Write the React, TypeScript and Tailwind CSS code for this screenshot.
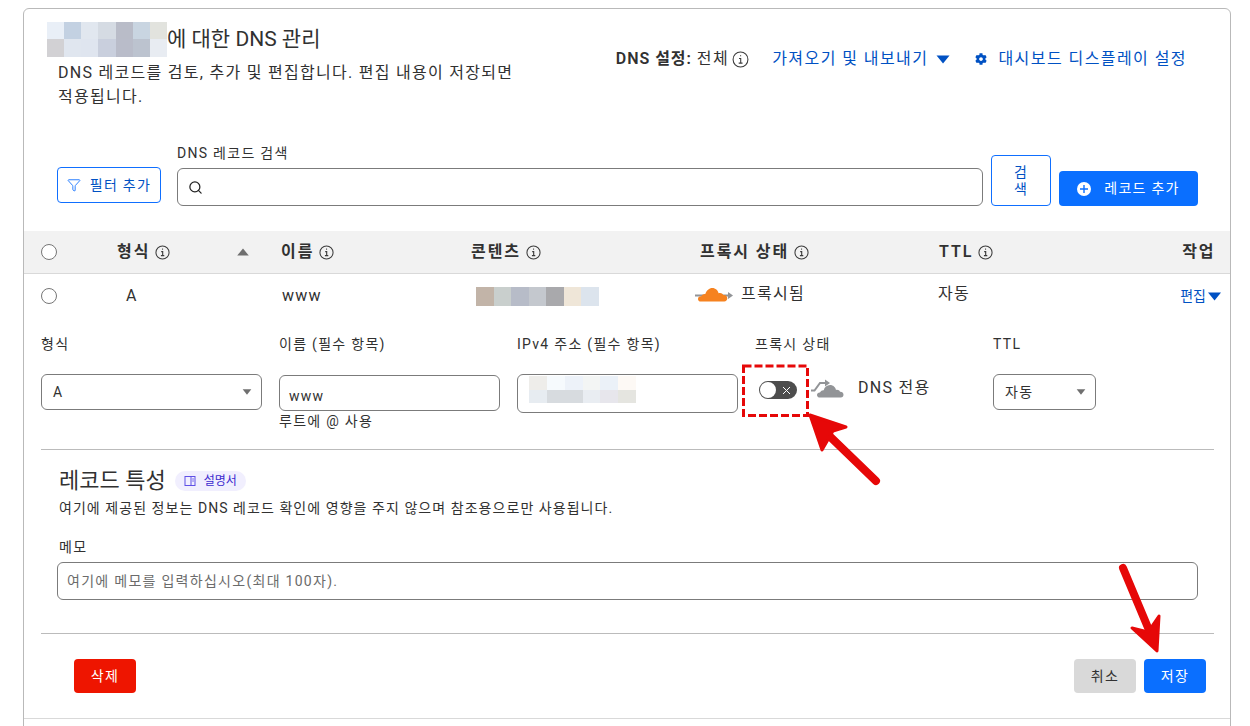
import React from 'react';
import { Filter, Search } from 'lucide-react';
import { FaCog } from 'react-icons/fa';

const mosaic = (colors: string[]) =>
  colors.map((c, i) => <div key={i} style={{ backgroundColor: c }} />);

const titleTiles = ['#e9eff7', '#c3d1e2', '#e1e7ef', '#d5dbe3', '#b9bcc8', '#c9d5e1', '#e2e3de', '#d2d1d4', '#e0e6ef', '#dfe5ef', '#c9cfdd', '#b9bcc9', '#bcc3cf', '#e8ecf2'];
const contentTiles = ['#c2b4a8', '#c9cfcd', '#b7bcc8', '#c4c8ce', '#a9a9ac', '#efe6d8', '#dce4ed'];
const ipTiles = ['#eeedea', '#f6fafd', '#edf2f9', '#f3f5f4', '#ebf1f8', '#fdf9f5', '#e7ecf1', '#d7dbdf', '#d7dbdf', '#e9edf2', '#e7e6ec', '#e5e5e0'];

const InfoIcon = () => (
  <svg width="15" height="15" viewBox="0 0 16 16" fill="none" stroke="#3a3a3a" strokeWidth="1.1" className="shrink-0">
    <circle cx="8" cy="8" r="7" />
    <path d="M6.6 7h1.6v4.2M6.3 11.4h3.6M7.6 4.4h1" strokeWidth="1.2" />
  </svg>
);

const Caret = ({ color, className }: { color: string; className: string }) => (
  <svg viewBox="0 0 14 9" className={className} fill={color}>
    <path d="M0.5 0.5h13L7 8.5z" />
  </svg>
);

const CircleCheck = () => (
  <span className="block w-4 h-4 rounded-full border border-[#767676] bg-white" />
);

const OrangeCloud = () => (
  <svg width="39" height="18" viewBox="0 0 39 18" className="shrink-0">
    <path d="M0 9.5h36" stroke="#929497" strokeWidth="2" />
    <path d="M33 6l5 3.5-5 3.5z" fill="#929497" />
    <path d="M6 15.5c-2.2 0-3-1.3-3-2.6 0-1.7 1.500-2.800 3.300-2.600 1-1.800 2.700-2.500 4-2.200C11.500 4.400 14.200 2 17.300 2c3.200 0 5.700 2.300 6.300 5.200 1.700-.6 4-.1 4.700 1.900 2-.4 4 .9 4 3.200 0 1.900-1.300 3.200-3 3.200z" fill="#f6821f" />
  </svg>
);

const GreyCloud = () => (
  <svg width="33" height="24" viewBox="0 0 33 24" className="shrink-0">
    <path d="M0 15.500h3.500l5.500-7.500h6" stroke="#929497" strokeWidth="2" fill="none" />
    <path d="M14 4.500l5 3.500-5 3.500z" fill="#929497" />
    <path d="M9 22.500c-2 0-3-1.300-3-2.600 0-1.600 1.400-2.700 3-2.500 1-1.800 2.300-2.400 3.700-2.200.8-3 3.200-5.200 6.300-5.200 3.100 0 5.500 2.200 6 5 1.700-.5 3.400.2 4 1.800 2-.2 3.500 1 3.500 3 0 1.500-1 2.700-2.700 2.700z" fill="#929497" />
  </svg>
);

const SelectBox = ({ value }: { value: string }) => (
  <div className="flex items-center justify-between h-[36px] rounded-[6px] border border-[#7b7b7b] pl-[11px] pr-[9px] text-[14px] text-[#313131]">
    <span>{value}</span>
    <Caret color="#6f6f6f" className="w-[10px] h-[6px]" />
  </div>
);

const ColHead = ({ label }: { label: string }) => (
  <div className="flex items-center gap-[5px]">
    <span className="text-[16px] font-semibold tracking-[0.12em]">{label}</span>
    <InfoIcon />
  </div>
);

export default function App() {
  return (
    <div className="h-[726px] overflow-hidden bg-white pl-[23px] pr-[19px] pt-2 text-[#313131] tracking-[0.08em] font-['Roboto','Noto_Sans_CJK_KR',sans-serif]">
      <div className="relative h-[760px] rounded-t-[6px] border border-[#b9b9b9]">
        {/* header */}
        <div className="flex justify-between h-[121px] pl-[34px] pr-[43px] pt-[12px]">
          <div>
            <div className="flex items-center h-[36px] -ml-[11px]">
              <div className="grid grid-cols-7 grid-rows-2 w-[120px] h-[35px]">{mosaic(titleTiles)}</div>
              <h1 className="text-[21px] leading-[30px] font-normal tracking-normal">에 대한 DNS 관리</h1>
            </div>
            <p className="mt-[4px] w-[470px] text-[16px] leading-[24px]">
              DNS 레코드를 검토, 추가 및 편집합니다. 편집 내용이 저장되면 적용됩니다.
            </p>
          </div>
          <div className="flex items-center h-[46px] mt-[15px] text-[16px] tracking-[0.09em]">
            <span className="font-semibold tracking-[0.06em]">DNS 설정:</span>
            <span className="ml-[5px]">전체</span>
            <span className="ml-[3px]"><svg width="17" height="17" viewBox="0 0 16 16" fill="none" stroke="#3a3a3a" strokeWidth="1"><circle cx="8" cy="8" r="7" /><path d="M6.600 7h1.600v4.200M6.300 11.400h3.600M7.600 4.400h1" /></svg></span>
            <span className="ml-[23px] text-[#0051c3]">가져오기 및 내보내기</span>
            <Caret color="#0051c3" className="ml-[8px] w-[14px] h-[9px]" />
            <FaCog className="ml-[25px] w-[12px] h-[12px] text-[#0051c3]" />
            <span className="ml-[11px] text-[#0051c3]">대시보드 디스플레이 설정</span>
          </div>
        </div>

        {/* search */}
        <div className="flex items-end h-[76px] pl-[33px] pr-[32px]">
          <button className="flex items-center justify-center gap-[9px] w-[104px] h-[36px] mb-[3px] rounded-[4px] border border-[#0f6fff] text-[14px] text-[#0051c3] bg-white">
            <Filter className="w-[14px] h-[14px] text-[#0f6fff]" strokeWidth={1.5} />
            필터 추가
          </button>
          <div className="ml-[16px] w-[806px]">
            <label className="block mb-[5px] text-[14px] leading-[20px]">DNS 레코드 검색</label>
            <div className="flex items-center h-[38px] rounded-[6px] border border-[#7b7b7b] pl-[11px]">
              <Search className="w-[15px] h-[15px] text-[#222] -ml-[1px]" strokeWidth={2} />
            </div>
          </div>
          <button className="ml-[8px] w-[60px] h-[51px] rounded-[4px] border border-[#0f6fff] text-[14px] leading-[17px] text-[#0051c3] bg-white">
            검<br />색
          </button>
          <button className="flex items-center justify-center gap-[13px] ml-[8px] w-[139px] h-[35px] rounded-[4px] bg-[#0a6fff] text-[14px] text-white">
            <svg width="14" height="14" viewBox="0 0 14 14">
              <circle cx="7" cy="7" r="7" fill="#fff" />
              <path d="M7 3v8M3 7h8" stroke="#0a6fff" strokeWidth="1.400" />
            </svg>
            레코드 추가
          </button>
        </div>

        {/* table */}
        <div className="mt-[25px] grid grid-cols-[76px_164px_190px_229px_239px_120px_1fr] items-center h-[43px] pl-[17px] pr-[15px] bg-[#f2f2f2] border-b border-[#d9d9d9]">
          <CircleCheck />
          <div className="relative">
            <ColHead label="형식" />
            <Caret color="#6f6f6f" className="absolute left-[119px] top-[8px] w-[14px] h-[8px] rotate-180" />
          </div>
          <ColHead label="이름" />
          <ColHead label="콘텐츠" />
          <ColHead label="프록시 상태" />
          <ColHead label="TTL" />
          <span className="justify-self-end text-[16px] font-semibold tracking-[0.1em]">작업</span>
        </div>

        <div className="grid grid-cols-[76px_164px_190px_229px_239px_120px_1fr] items-center h-[44px] pl-[17px] pr-[8px] text-[16px]">
          <CircleCheck />
          <span className="pl-[9px]">A</span>
          <span className="pl-[1px]">www</span>
          <div className="grid grid-cols-7 ml-[5px] w-[123px] h-[19px]">{mosaic(contentTiles)}</div>
          <div className="flex items-center gap-[7px] -ml-[5px] -mt-[3px]">
            <OrangeCloud />
            <span className="-mt-[1px]">프록시됨</span>
          </div>
          <span className="-mt-[5px] -ml-[1px]">자동</span>
          <div className="flex items-center justify-end text-[14px] text-[#0051c3] tracking-normal">
            편집
            <Caret color="#0051c3" className="ml-[1px] w-[15px] h-[9px]" />
          </div>
        </div>

        {/* edit form */}
        <div className="ml-[17px] mr-[16px] pt-[16px]">
          <div className="grid grid-cols-[221px_221px_221px_221px_103px] gap-x-[17px] text-[14px] leading-[20px]">
            <label>형식</label>
            <label>이름 (필수 항목)</label>
            <label>IPv4 주소 (필수 항목)</label>
            <label>프록시 상태</label>
            <label>TTL</label>
          </div>
          <div className="mt-[20px] h-[75px] grid grid-cols-[221px_221px_221px_221px_103px] gap-x-[17px] items-start">
            <SelectBox value="A" />
            <div className="mt-[1px]">
              <div className="flex items-end h-[36px] rounded-[6px] border border-[#7b7b7b] pl-[9px] pb-[3px] text-[14px]">www</div>
              <div className="text-[14px] leading-[20px]">루트에 @ 사용</div>
            </div>
            <div className="h-[39px] rounded-[6px] border border-[#7b7b7b] pl-[11px] pt-[1px] overflow-hidden">
              <div className="grid grid-cols-6 w-[107px] h-[27px]">{mosaic(ipTiles)}</div>
            </div>
            <div className="flex items-start pl-[4px] pt-[1px]">
              <div role="switch" aria-checked="false" className="flex items-center justify-between mt-[6px] w-[38px] h-[18px] rounded-full bg-[#4d4d4d] pl-[1px] pr-[6px]">
                <span className="w-[16px] h-[16px] rounded-full bg-white" />
                <svg width="9" height="9" viewBox="0 0 9 9" stroke="#fff" strokeWidth="1"><path d="M1 1l7 7M8 1l-7 7" /></svg>
              </div>
              <div className="ml-[14px]"><GreyCloud /></div>
              <span className="ml-[14px] mt-[1px] text-[16px] leading-[24px]">DNS 전용</span>
            </div>
            <SelectBox value="자동" />
          </div>
          <div className="border-t border-[#bbbbbb]" />

          <div className="pl-[18px] pr-[16px]">
            <div className="flex items-center gap-[9px] mt-[17px] h-[28px]">
              <h2 className="text-[22px] leading-[28px] font-normal tracking-normal">레코드 특성</h2>
              <span className="flex items-center gap-[8px] h-[20px] px-[9px] rounded-full bg-[#f1effe] text-[12px] text-[#3b2bcf] tracking-normal">
                <svg width="12" height="12" viewBox="0 0 12 12" fill="none" stroke="#5f50e6" strokeWidth="1"><rect x="1" y="1.500" width="10" height="9" /><path d="M7 1.500v9M8.300 4h1.500M8.300 6h1.500" /></svg>
                설명서
              </span>
            </div>
            <p className="mt-[2px] text-[14px] leading-[22px] tracking-[0.075em]">여기에 제공된 정보는 DNS 레코드 확인에 영향을 주지 않으며 참조용으로만 사용됩니다.</p>
            <label className="block mt-[18px] text-[14px] leading-[20px]">메모</label>
            <input
              readOnly
              placeholder="여기에 메모를 입력하십시오(최대 100자)."
              className="block mt-[5px] -ml-[2px] w-[1141px] h-[38px] rounded-[6px] border border-[#7b7b7b] px-[9px] text-[14px] outline-none placeholder:text-[#6b6b6b]"
            />
          </div>
          <div className="mt-[33px] border-t border-[#bbbbbb]" />
          <div className="flex justify-between mt-[25px] pl-[33px] pr-[8px]">
            <button className="w-[62px] h-[34px] rounded-[4px] bg-[#ee1500] text-[14px] text-white">삭제</button>
            <div className="flex gap-[8px]">
              <button className="w-[62px] h-[34px] rounded-[4px] bg-[#d9d9d9] text-[14px]">취소</button>
              <button className="w-[62px] h-[34px] rounded-[4px] bg-[#0a6fff] text-[14px] text-white">저장</button>
            </div>
          </div>
        </div>
        <div className="mt-[25px] border-t border-[#d9d9d9]" />

        {/* red annotations drawn on top of the screenshot */}
        <svg width="1250" height="726" viewBox="0 0 1250 726" fill="none" className="absolute -left-[24px] -top-[9px] pointer-events-none">
          <rect x="743.500" y="366" width="64" height="49.500" stroke="#e60808" strokeWidth="3" strokeDasharray="8 3" />
          <path d="M876 481L816 423" stroke="#e60808" strokeWidth="8" strokeLinecap="round" />
          <path d="M810 415L846 427L833 431L822 450Z" fill="#e60808" stroke="#e60808" strokeWidth="3" strokeLinejoin="round" />
          <path d="M1123 568L1154 642" stroke="#e60808" strokeWidth="8" strokeLinecap="round" />
          <path d="M1157 651L1132 628L1148 632L1159 616Z" fill="#e60808" stroke="#e60808" strokeWidth="3" strokeLinejoin="round" />
        </svg>
      </div>
    </div>
  );
}
